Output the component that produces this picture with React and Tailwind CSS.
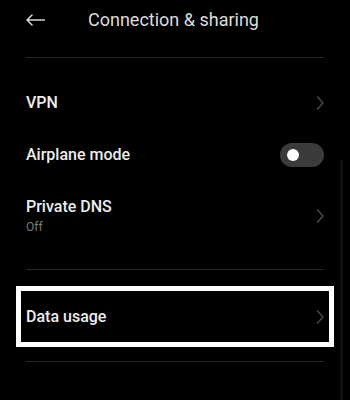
import React from "react";

function Chevron() {
  return (
    <svg width="8" height="14" viewBox="0 0 8 14" fill="none" className="shrink-0">
      <path d="M1.5 1 L7 7 L1.5 13" stroke="#4a4a4a" strokeWidth="1.4" strokeLinecap="round" strokeLinejoin="round" />
    </svg>
  );
}

export default function App() {
  return (
    <div
      className="relative w-[350px] h-[400px] bg-black overflow-hidden flex flex-col"
      style={{ fontFamily: 'Roboto, "Noto Sans", sans-serif' }}
    >
      {/* Header */}
      <div className="h-[40px] flex items-center pl-[26px] shrink-0">
        <svg width="19" height="12" viewBox="0 0 19 12" fill="none" className="shrink-0">
          <path d="M18.5 6 H1 M6 1 L1 6 L6 11" stroke="#d6d6d6" strokeWidth="1.5" strokeLinecap="round" strokeLinejoin="round" />
        </svg>
        <span className="ml-[43px] text-[18px] leading-none text-[#dcdcdc]">Connection &amp; sharing</span>
      </div>
      <div className="mx-[26px] mt-[17px] h-px bg-[#262626] shrink-0" />

      {/* VPN */}
      <div className="mt-[20px] h-[50px] flex items-center justify-between px-[26px] shrink-0">
        <span className="text-[16px] font-medium leading-none text-[#ededed]">VPN</span>
        <Chevron />
      </div>

      {/* Airplane mode */}
      <div className="h-[54px] flex items-center justify-between px-[26px] shrink-0">
        <span className="text-[16px] font-medium leading-none text-[#ededed]">Airplane mode</span>
        <div className="w-[44px] h-[24px] rounded-full bg-[#3b3b3b] flex items-center pl-[7px]">
          <div className="w-[12px] h-[12px] rounded-full bg-white" />
        </div>
      </div>

      {/* Private DNS */}
      <div className="h-[68px] flex items-center justify-between px-[26px] shrink-0">
        <div className="flex flex-col">
          <span className="text-[16px] font-medium leading-none text-[#ededed]">Private DNS</span>
          <span className="mt-[6px] text-[12px] leading-none text-[#7d7d7d]">Off</span>
        </div>
        <Chevron />
      </div>

      <div className="mx-[26px] mt-[19px] h-px bg-[#262626] shrink-0" />

      {/* Data usage highlighted */}
      <div className="mx-[16px] mt-[16px] h-[61px] border-[5px] border-white flex items-center justify-between px-[5px] shrink-0">
        <span className="text-[16px] font-medium leading-none text-[#ededed]">Data usage</span>
        <Chevron />
      </div>

      <div className="mx-[26px] mt-[14px] h-px bg-[#262626] shrink-0" />

      {/* faint scroll indicator */}
      <div className="absolute left-[340px] top-[160px] w-[3px] h-[240px] bg-[#0f0f0f]" />
    </div>
  );
}
